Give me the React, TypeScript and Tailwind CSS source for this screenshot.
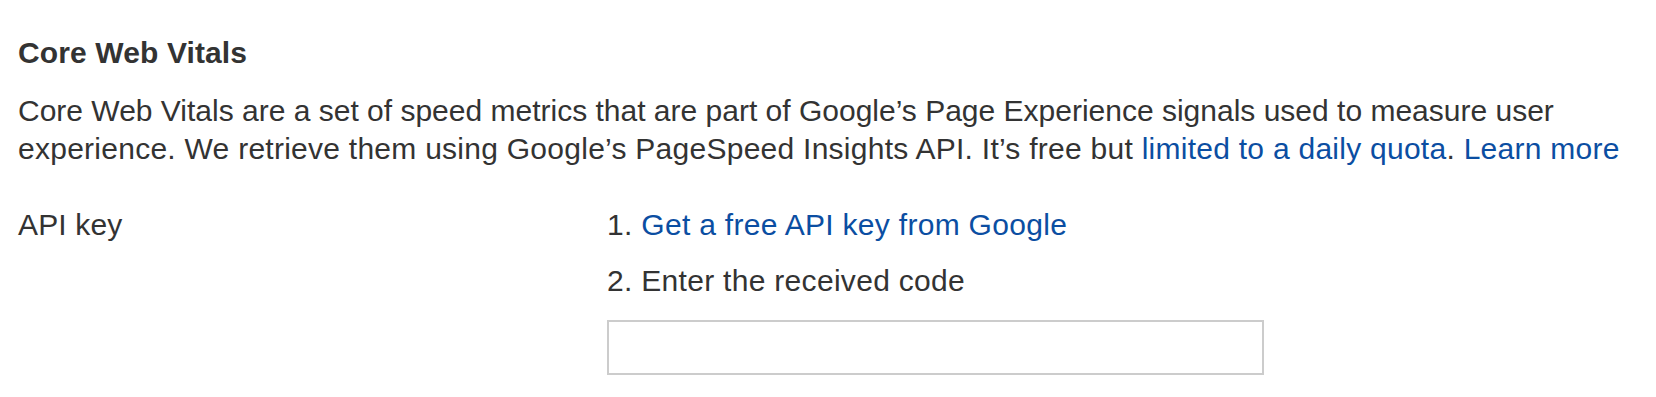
import React from "react";

export default function App() {
  return (
    <div className="bg-white min-h-[397px] pl-[18px] pr-[4px] pt-[34px] font-['Liberation_Sans',Arial,sans-serif] text-[#333333] text-[30px] leading-[38.5px]">
      <h2 className="font-bold tracking-[0.12px]">Core Web Vitals</h2>
      <p className="mt-[19px]">
        Core Web Vitals are a set of speed metrics that are part of Google’s Page Experience signals used to measure user{" "}
        <span className="tracking-[0.26px]">
          experience. We retrieve them using Google’s PageSpeed Insights API. It’s free but{" "}
          <a href="#" className="text-[#0b4ea2]">limited to a daily quota</a>.{" "}
          <a href="#" className="text-[#0b4ea2]">Learn more</a>
        </span>
      </p>
      <div className="mt-[37px] flex">
        <div className="w-[589px] shrink-0 tracking-[0.15px]">API key</div>
        <div className="flex flex-col tracking-[0.3px]">
          <div>
            1. <a href="#" className="text-[#0b4ea2]">Get a free API key from Google</a>
          </div>
          <div className="mt-[18px]">2. Enter the received code</div>
          <input
            type="text"
            className="mt-[19px] w-[657px] h-[55px] border-2 border-[#cccccc] bg-white outline-none"
          />
        </div>
      </div>
    </div>
  );
}
